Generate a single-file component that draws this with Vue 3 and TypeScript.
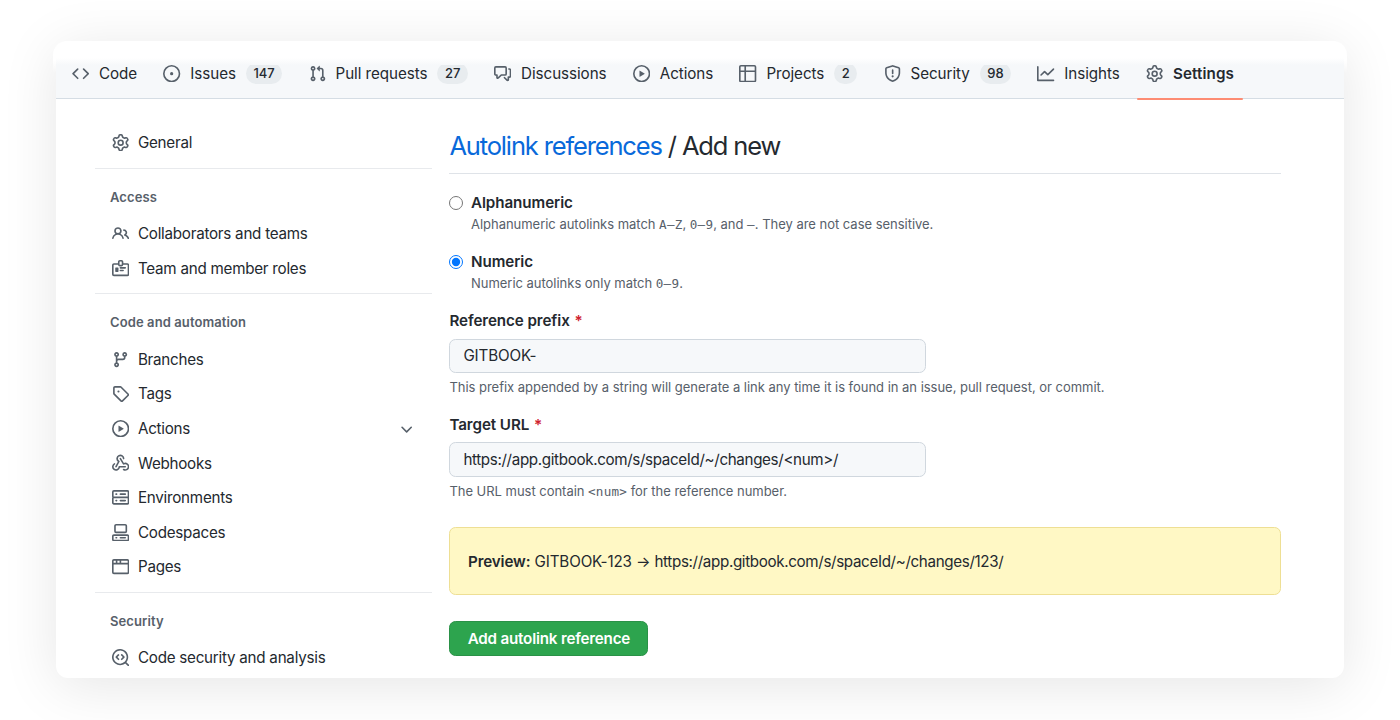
<script setup lang="ts">
import { computed, ref } from 'vue'

const icons = {
  code: 'M4.72 3.22a.75.75 0 011.06 1.06L2.06 8l3.72 3.72a.75.75 0 11-1.06 1.06L.47 8.53a.75.75 0 010-1.06l4.25-4.25zm6.56 0a.75.75 0 10-1.06 1.06L13.94 8l-3.72 3.72a.75.75 0 101.06 1.06l4.25-4.25a.75.75 0 000-1.06l-4.25-4.25z',
  issue: 'M8 9.5a1.5 1.5 0 100-3 1.5 1.5 0 000 3zM8 0a8 8 0 100 16A8 8 0 008 0zM1.5 8a6.5 6.5 0 1113 0 6.5 6.5 0 01-13 0z',
  pull: 'M7.177 3.073L9.573.677A.25.25 0 0110 .854v4.792a.25.25 0 01-.427.177L7.177 3.427a.25.25 0 010-.354zM3.75 2.5a.75.75 0 100 1.5.75.75 0 000-1.5zm-2.25.75a2.25 2.25 0 113 2.122v5.256a2.251 2.251 0 11-1.5 0V5.372A2.25 2.25 0 011.5 3.25zM11 2.5h-1V4h1a1 1 0 011 1v5.628a2.251 2.251 0 101.5 0V5A2.5 2.5 0 0011 2.5zm1 10.25a.75.75 0 111.5 0 .75.75 0 01-1.5 0zM3.75 12a.75.75 0 100 1.5.75.75 0 000-1.5z',
  discussion: 'M1.5 2.75a.25.25 0 01.25-.25h8.5a.25.25 0 01.25.25v5.5a.25.25 0 01-.25.25h-3.5a.75.75 0 00-.53.22L3.5 11.44V9.25a.75.75 0 00-.75-.75h-1a.25.25 0 01-.25-.25v-5.5zM1.75 1A1.75 1.75 0 000 2.75v5.5C0 9.216.784 10 1.75 10H2v1.543a1.457 1.457 0 002.487 1.03L7.061 10h3.189A1.75 1.75 0 0012 8.25v-5.5A1.75 1.75 0 0010.25 1h-8.5zM14.5 4.75a.25.25 0 00-.25-.25h-.5a.75.75 0 110-1.5h.5c.966 0 1.75.784 1.75 1.75v5.5A1.75 1.75 0 0114.25 12H14v1.543a1.457 1.457 0 01-2.487 1.03L9.22 12.28a.75.75 0 111.06-1.06l2.22 2.22v-2.19a.75.75 0 01.75-.75h1a.25.25 0 00.25-.25v-5.5z',
  play: 'M1.5 8a6.5 6.5 0 1113 0 6.5 6.5 0 01-13 0zM8 0a8 8 0 100 16A8 8 0 008 0zM6.379 5.227A.25.25 0 006 5.442v5.117a.25.25 0 00.379.214l4.264-2.559a.25.25 0 000-.428L6.379 5.227z',
  table: 'M0 1.75C0 .784.784 0 1.75 0h12.5C15.216 0 16 .784 16 1.75v12.5A1.75 1.75 0 0114.25 16H1.75A1.75 1.75 0 010 14.25V1.75zM1.5 6.5v7.75c0 .138.112.25.25.25H5v-8H1.5zM5 5H1.5V1.75a.25.25 0 01.25-.25H5V5zm1.5 1.5v8h7.75a.25.25 0 00.25-.25V6.5h-8zm8-1.5h-8V1.5h7.75a.25.25 0 01.25.25V5z',
  shield: 'M7.467.133a1.75 1.75 0 011.066 0l5.25 1.68A1.75 1.75 0 0115 3.48V7c0 1.566-.32 3.182-1.303 4.682-.983 1.498-2.585 2.813-5.032 3.855a1.7 1.7 0 01-1.33 0c-2.447-1.042-4.049-2.357-5.032-3.855C1.32 10.182 1 8.566 1 7V3.48a1.75 1.75 0 011.217-1.667l5.25-1.68zm.61 1.429a.25.25 0 00-.153 0l-5.25 1.68a.25.25 0 00-.174.238V7c0 1.358.275 2.666 1.057 3.86.784 1.194 2.121 2.34 4.366 3.297a.2.2 0 00.154 0c2.245-.956 3.582-2.104 4.366-3.298C13.225 9.666 13.5 8.36 13.5 7V3.48a.25.25 0 00-.174-.237l-5.25-1.68zM9 10.5a1 1 0 11-2 0 1 1 0 012 0zm-.25-5.75a.75.75 0 10-1.5 0v3a.75.75 0 001.5 0v-3z',
  graph: 'M1.5 1.75a.75.75 0 00-1.5 0v12.5c0 .414.336.75.75.75h14.5a.75.75 0 000-1.5H1.5V1.75zm14.28 2.53a.75.75 0 00-1.06-1.06L10 7.94 7.53 5.47a.75.75 0 00-1.06 0L3.22 8.72a.75.75 0 001.06 1.06L7 7.06l2.47 2.47a.75.75 0 001.06 0l5.25-5.25z',
  gear: 'M7.429 1.525a6.593 6.593 0 011.142 0c.036.003.108.036.137.146l.289 1.105c.147.56.55.967.997 1.189.174.086.341.183.501.29.417.278.97.423 1.53.27l1.102-.303c.11-.03.175.016.195.046.219.31.41.641.573.989.014.031.022.11-.059.19l-.815.806c-.411.406-.562.957-.53 1.456a4.588 4.588 0 010 .582c-.032.499.119 1.05.53 1.456l.815.806c.08.08.073.159.059.19a6.494 6.494 0 01-.573.99c-.02.029-.086.074-.195.045l-1.103-.303c-.559-.153-1.112-.008-1.529.27-.16.107-.327.204-.5.29-.449.222-.851.628-.998 1.189l-.289 1.105c-.029.11-.101.143-.137.146a6.613 6.613 0 01-1.142 0c-.036-.003-.108-.037-.137-.146l-.289-1.105c-.147-.56-.55-.967-.997-1.189a4.502 4.502 0 01-.501-.29c-.417-.278-.97-.423-1.53-.27l-1.102.303c-.11.03-.175-.016-.195-.046a6.492 6.492 0 01-.573-.989c-.014-.031-.022-.11.059-.19l.815-.806c.411-.406.562-.957.53-1.456a4.587 4.587 0 010-.582c.032-.499-.119-1.05-.53-1.456l-.815-.806c-.08-.08-.073-.159-.059-.19a6.44 6.44 0 01.573-.99c.02-.029.086-.075.195-.045l1.103.303c.559.153 1.112.008 1.529-.27.16-.107.327-.204.5-.29.449-.222.851-.628.998-1.189l.289-1.105c.029-.11.101-.143.137-.146zM8 0c-.236 0-.47.01-.701.03-.743.065-1.29.615-1.458 1.261l-.29 1.106c-.017.066-.078.158-.211.224a5.994 5.994 0 00-.668.386c-.123.082-.233.09-.3.071L3.27 2.776c-.644-.177-1.392.02-1.82.63a7.977 7.977 0 00-.704 1.217c-.315.675-.111 1.422.363 1.891l.815.806c.05.048.098.147.088.294a6.084 6.084 0 000 .772c.01.147-.038.246-.088.294l-.815.806c-.474.469-.678 1.216-.363 1.891.2.428.436.835.704 1.218.428.609 1.176.806 1.82.63l1.103-.303c.066-.019.176-.011.299.071.213.143.436.272.668.386.133.066.194.158.212.224l.289 1.106c.169.646.715 1.196 1.458 1.26a8.094 8.094 0 001.402 0c.743-.064 1.29-.614 1.458-1.26l.29-1.106c.017-.066.078-.158.211-.224a5.98 5.98 0 00.668-.386c.123-.082.233-.09.3-.071l1.102.302c.644.177 1.392-.02 1.82-.63.268-.382.505-.789.704-1.217.315-.675.111-1.422-.364-1.891l-.814-.806c-.05-.048-.098-.147-.088-.294a6.1 6.1 0 000-.772c-.01-.147.039-.246.088-.294l.814-.806c.475-.469.679-1.216.364-1.891a7.992 7.992 0 00-.704-1.218c-.428-.609-1.176-.806-1.82-.63l-1.103.303c-.066.019-.176.011-.299-.071a5.991 5.991 0 00-.668-.386c-.133-.066-.194-.158-.212-.224L10.16 1.29C9.99.645 9.444.095 8.701.031A8.094 8.094 0 008 0zm1.5 8a1.5 1.5 0 11-3 0 1.5 1.5 0 013 0zM11 8a3 3 0 11-6 0 3 3 0 016 0z',
  people: 'M5.5 3.5a2 2 0 100 4 2 2 0 000-4zM2 5.5a3.5 3.5 0 115.898 2.549 5.507 5.507 0 013.034 4.084.75.75 0 11-1.482.235 4.001 4.001 0 00-7.9 0 .75.75 0 01-1.482-.236A5.507 5.507 0 013.102 8.05 3.49 3.49 0 012 5.5zM11 4a.75.75 0 100 1.5 1.5 1.5 0 01.666 2.844.75.75 0 00-.416.672v.352a.75.75 0 00.574.73c1.2.289 2.162 1.2 2.522 2.372a.75.75 0 101.434-.44 5.01 5.01 0 00-2.56-3.012A3 3 0 0011 4z',
  badge: 'M3 7.5a.5.5 0 01.5-.5h2a.5.5 0 01.5.5v3a.5.5 0 01-.5.5h-2a.5.5 0 01-.5-.5v-3zm4 2.25A.75.75 0 017.75 9h2.5a.75.75 0 010 1.5h-2.5A.75.75 0 017 9.75zM7.75 6.5a.75.75 0 000 1.5h4.5a.75.75 0 000-1.5h-4.5zM7.25 0h1.5c.966 0 1.75.784 1.75 1.75V3h3.75c.966 0 1.75.784 1.75 1.75v8.5A1.75 1.75 0 0114.25 15H1.75A1.75 1.75 0 010 13.25v-8.5C0 3.784.784 3 1.75 3H5.5V1.75C5.5.784 6.284 0 7.25 0zm3.232 4.5A1.75 1.75 0 018.75 6h-1.5a1.75 1.75 0 01-1.732-1.5H1.75a.25.25 0 00-.25.25v8.5c0 .138.112.25.25.25h12.5a.25.25 0 00.25-.25v-8.5a.25.25 0 00-.25-.25h-3.768zM7 1.75v2.5c0 .138.112.25.25.25h1.5A.25.25 0 009 4.25v-2.5a.25.25 0 00-.25-.25h-1.5a.25.25 0 00-.25.25z',
  branch: 'M11.75 2.5a.75.75 0 100 1.5.75.75 0 000-1.5zm-2.25.75a2.25 2.25 0 113 2.122V6A2.5 2.5 0 0110 8.5H6a1 1 0 00-1 1v1.128a2.251 2.251 0 11-1.5 0V5.372a2.25 2.25 0 111.5 0v1.836A2.492 2.492 0 016 7h4a1 1 0 001-1v-.628A2.25 2.25 0 019.5 3.25zM4.25 12a.75.75 0 100 1.5.75.75 0 000-1.5zM3.5 3.25a.75.75 0 111.5 0 .75.75 0 01-1.5 0z',
  tag: 'M2.5 7.775V2.75a.25.25 0 01.25-.25h5.025a.25.25 0 01.177.073l6.25 6.25a.25.25 0 010 .354l-5.025 5.025a.25.25 0 01-.354 0l-6.25-6.25a.25.25 0 01-.073-.177zm-1.5 0V2.75C1 1.784 1.784 1 2.75 1h5.025c.464 0 .91.184 1.238.513l6.25 6.25a1.75 1.75 0 010 2.474l-5.026 5.026a1.75 1.75 0 01-2.474 0l-6.25-6.25A1.75 1.75 0 011 7.775zM6 5a1 1 0 100 2 1 1 0 000-2z',
  webhook: 'M5.5 4.25a2.25 2.25 0 014.5 0 .75.75 0 001.5 0 3.75 3.75 0 10-6.14 2.889l-2.272 4.258a.75.75 0 001.324.706L7 7.25a.75.75 0 00-.309-1.015A2.25 2.25 0 015.5 4.25zM7.364 3.607a.75.75 0 011.03.257l2.608 4.349a3.75 3.75 0 11-.628 6.785.75.75 0 01.752-1.299 2.25 2.25 0 10-.033-3.88.75.75 0 01-1.03-.256L7.107 4.636a.75.75 0 01.257-1.03zM2.9 8.776A.75.75 0 012.625 9.8 2.25 2.25 0 106 11.75a.75.75 0 01.75-.751h5.5a.75.75 0 010 1.5H7.425a3.751 3.751 0 11-5.55-3.998.75.75 0 011.024.274z',
  server: 'M1.75 1A1.75 1.75 0 000 2.75v4c0 .372.116.717.314 1a1.742 1.742 0 00-.314 1v4c0 .966.784 1.75 1.75 1.75h12.5A1.75 1.75 0 0016 12.75v-4c0-.372-.116-.717-.314-1 .198-.283.314-.628.314-1v-4A1.75 1.75 0 0014.25 1H1.75zm0 7.5a.25.25 0 00-.25.25v4c0 .138.112.25.25.25h12.5a.25.25 0 00.25-.25v-4a.25.25 0 00-.25-.25H1.75zM1.5 2.75a.25.25 0 01.25-.25h12.5a.25.25 0 01.25.25v4a.25.25 0 01-.25.25H1.75a.25.25 0 01-.25-.25v-4zm5.5 2A.75.75 0 017.75 4h4.5a.75.75 0 010 1.5h-4.5A.75.75 0 017 4.75zM7.75 10a.75.75 0 000 1.5h4.5a.75.75 0 000-1.5h-4.5zM3 4.75A.75.75 0 013.75 4h.5a.75.75 0 010 1.5h-.5A.75.75 0 013 4.75zM3.75 10a.75.75 0 000 1.5h.5a.75.75 0 000-1.5h-.5z',
  codespaces: 'M2 1.75C2 .784 2.784 0 3.75 0h8.5C13.216 0 14 .784 14 1.75v5a1.75 1.75 0 01-1.75 1.75h-8.5A1.75 1.75 0 012 6.75v-5zm1.75-.25a.25.25 0 00-.25.25v5c0 .138.112.25.25.25h8.5a.25.25 0 00.25-.25v-5a.25.25 0 00-.25-.25h-8.5zM0 11.25c0-.966.784-1.75 1.75-1.75h12.5c.966 0 1.75.784 1.75 1.75v3A1.75 1.75 0 0114.25 16H1.75A1.75 1.75 0 010 14.25v-3zM1.75 11a.25.25 0 00-.25.25v3c0 .138.112.25.25.25h12.5a.25.25 0 00.25-.25v-3a.25.25 0 00-.25-.25H1.75zM3 12.75a.75.75 0 01.75-.75h.5a.75.75 0 010 1.5h-.5a.75.75 0 01-.75-.75zm4 0a.75.75 0 01.75-.75h4.5a.75.75 0 010 1.5h-4.5a.75.75 0 01-.75-.75z',
  browser: 'M0 2.75C0 1.784.784 1 1.75 1h12.5c.966 0 1.75.784 1.75 1.75v10.5A1.75 1.75 0 0114.25 15H1.75A1.75 1.75 0 010 13.25V2.75zm1.75-.25a.25.25 0 00-.25.25V4.5h2v-2H1.75zM5 2.5v2h2v-2H5zm3.5 0v2h6V2.75a.25.25 0 00-.25-.25H8.5zm6 3.5h-13v7.25c0 .138.112.25.25.25h12.5a.25.25 0 00.25-.25V6z',
  codescan: 'M8.47 4.97a.75.75 0 000 1.06L9.94 7.5 8.47 8.97a.75.75 0 101.06 1.06l2-2a.75.75 0 000-1.06l-2-2a.75.75 0 00-1.06 0zM6.53 6.03a.75.75 0 00-1.06-1.06l-2 2a.75.75 0 000 1.06l2 2a.75.75 0 101.06-1.06L5.06 7.5l1.47-1.47zM12.246 13.307a7.5 7.5 0 111.06-1.06l2.474 2.473a.75.75 0 11-1.06 1.06l-2.474-2.473zM1.5 7.5a6 6 0 1110.386 4.094.75.75 0 00-.292.293A6 6 0 011.5 7.5z',
  chevron: 'M12.78 6.22a.75.75 0 010 1.06l-4.25 4.25a.75.75 0 01-1.06 0L3.22 7.28a.75.75 0 011.06-1.06L8 9.94l3.72-3.72a.75.75 0 011.06 0z',
} as const

type IconName = keyof typeof icons

interface Tab {
  icon: IconName
  label: string
  count?: number
  active?: boolean
}

interface MenuItem {
  icon: IconName
  label: string
  expandable?: boolean
}

interface MenuGroup {
  title?: string
  items: MenuItem[]
}

const tabs: Tab[] = [
  { icon: 'code', label: 'Code' },
  { icon: 'issue', label: 'Issues', count: 147 },
  { icon: 'pull', label: 'Pull requests', count: 27 },
  { icon: 'discussion', label: 'Discussions' },
  { icon: 'play', label: 'Actions' },
  { icon: 'table', label: 'Projects', count: 2 },
  { icon: 'shield', label: 'Security', count: 98 },
  { icon: 'graph', label: 'Insights' },
  { icon: 'gear', label: 'Settings', active: true },
]

const groups: MenuGroup[] = [
  { items: [{ icon: 'gear', label: 'General' }] },
  {
    title: 'Access',
    items: [
      { icon: 'people', label: 'Collaborators and teams' },
      { icon: 'badge', label: 'Team and member roles' },
    ],
  },
  {
    title: 'Code and automation',
    items: [
      { icon: 'branch', label: 'Branches' },
      { icon: 'tag', label: 'Tags' },
      { icon: 'play', label: 'Actions', expandable: true },
      { icon: 'webhook', label: 'Webhooks' },
      { icon: 'server', label: 'Environments' },
      { icon: 'codespaces', label: 'Codespaces' },
      { icon: 'browser', label: 'Pages' },
    ],
  },
  {
    title: 'Security',
    items: [{ icon: 'codescan', label: 'Code security and analysis' }],
  },
]

const kind = ref<'alphanumeric' | 'numeric'>('numeric')
const prefix = ref('GITBOOK-')
const target = ref('https://app.gitbook.com/s/spaceId/~/changes/<num>/')
const previewUrl = computed(() => target.value.replace('<num>', '123'))
</script>

<template>
  <div class="page">
    <div class="card">
      <div class="fade"></div>
      <nav class="tabs">
        <a v-for="tab in tabs" :key="tab.label" class="tab" :class="{ active: tab.active }">
          <svg class="icon" viewBox="0 0 16 16"><path fill-rule="evenodd" :d="icons[tab.icon]" /></svg>
          <span class="tab-label">{{ tab.label }}</span>
          <span v-if="tab.count" class="count">{{ tab.count }}</span>
        </a>
      </nav>

      <div class="body">
        <aside class="side">
          <section v-for="(group, i) in groups" :key="i" class="group">
            <h3 v-if="group.title" class="group-title">{{ group.title }}</h3>
            <a v-for="item in group.items" :key="item.label" class="item">
              <svg class="icon" viewBox="0 0 16 16"><path fill-rule="evenodd" :d="icons[item.icon]" /></svg>
              <span class="item-label">{{ item.label }}</span>
              <svg v-if="item.expandable" class="icon" viewBox="0 0 16 16"><path :d="icons.chevron" /></svg>
            </a>
          </section>
        </aside>

        <main class="main">
          <h2 class="title"><a class="link">Autolink references</a> / Add new</h2>

          <label class="option">
            <input v-model="kind" class="radio" type="radio" value="alphanumeric" />
            <span class="option-text">
              <strong class="label">Alphanumeric</strong>
              <span class="note">Alphanumeric autolinks match <code>A–Z</code>, <code>0–9</code>, and <code>–</code>. They are not case sensitive.</span>
            </span>
          </label>
          <label class="option">
            <input v-model="kind" class="radio" type="radio" value="numeric" />
            <span class="option-text">
              <strong class="label">Numeric</strong>
              <span class="note">Numeric autolinks only match <code>0–9</code>.</span>
            </span>
          </label>

          <div class="field">
            <label class="label" for="prefix">Reference prefix <span class="required">*</span></label>
            <input id="prefix" v-model="prefix" class="input" type="text" />
            <p class="note">This prefix appended by a string will generate a link any time it is found in an issue, pull request, or commit.</p>
          </div>
          <div class="field">
            <label class="label" for="target">Target URL <span class="required">*</span></label>
            <input id="target" v-model="target" class="input url" type="text" />
            <p class="note">The URL must contain <code>&lt;num&gt;</code> for the reference number.</p>
          </div>

          <div class="preview">
            <p><strong>Preview:</strong> {{ prefix }}123 → <span class="url">{{ previewUrl }}</span></p>
          </div>
          <button class="submit" type="button">Add autolink reference</button>
        </main>
      </div>
    </div>
  </div>
</template>

<style>
body {
  margin: 0;
  background: #fff;
}
</style>

<style scoped>
.page {
  box-sizing: border-box;
  width: 1400px;
  height: 720px;
  padding: 41px 56px 42px;
  overflow: hidden;
  background: #fff;
  color: #24292f;
  font-family: Inter, 'Liberation Sans', sans-serif;
  font-size: 15.2px;
}

.card {
  position: relative;
  height: 637px;
  border-radius: 12px;
  background: #fff;
  box-shadow: 0 8px 56px rgba(0, 0, 0, 0.1);
}

/* white lip that overhangs the card on both sides and melts into the tab bar */
.card::before {
  content: '';
  position: absolute;
  top: 0;
  left: -3px;
  right: -3px;
  height: 32px;
  border-radius: 14px 14px 0 0;
  background: linear-gradient(#fff 60%, rgba(255, 255, 255, 0));
}

.fade {
  position: relative;
  height: 24px;
  background: linear-gradient(#fff 17px, #f6f8fa 24px);
  border-radius: 14px 14px 0 0;
}

.tabs {
  position: relative;
  box-sizing: border-box;
  display: flex;
  align-items: center;
  gap: 9px;
  height: 34px;
  padding-left: 7.5px;
  padding-bottom: 16px;
  border-bottom: 1px solid #d5dde4;
  background: #f6f8fa;
  clip-path: inset(0 0 -1px);
}

.tab {
  position: relative;
  display: flex;
  align-items: center;
  height: 22px;
  padding: 0 8.65px;
  line-height: 22px;
  letter-spacing: -0.06px;
}

.tab.active {
  font-weight: 600;
  letter-spacing: 0.12px;
}

.tab.active::after {
  content: '';
  position: absolute;
  left: 0;
  right: 0;
  bottom: -15.5px;
  height: 2px;
  border-radius: 1px;
  background: #fd8c73;
}

.icon {
  flex: none;
  width: 17.3px;
  height: 17.3px;
  margin-right: 8.65px;
  fill: #57606a;
}

.tab .icon {
  margin-right: 9.6px;
}

.count {
  box-sizing: border-box;
  min-width: 21.6px;
  height: 21.6px;
  margin-left: 9.9px;
  padding: 0 7.6px;
  border-radius: 11px;
  background: #e8ecef;
  font-size: 13px;
  font-weight: 500;
  line-height: 21.6px;
  letter-spacing: 0;
  text-align: center;
}

.body {
  display: flex;
  gap: 17.4px;
  height: 579px;
  padding: 0 63.4px 0 39px;
  overflow: hidden;
}

.side {
  flex: none;
  width: 337px;
  padding-top: 26px;
}

.group {
  padding-bottom: 7.4px;
}

.group:first-child {
  padding-bottom: 8.2px;
}

.group + .group {
  border-top: 1px solid #e8eaed;
}

.group-title {
  margin: 0;
  padding: 17px 15px 8.8px;
  color: #57606a;
  font-size: 13px;
  font-weight: 600;
  line-height: 22px;
  letter-spacing: 0.1px;
}

.item {
  display: flex;
  align-items: center;
  height: 34.6px;
  padding: 0 8px 0 17px;
  letter-spacing: -0.25px;
}

.item-label {
  flex: 1;
}

.main {
  flex: 1;
  min-width: 0;
  padding-top: 26px;
}

.title {
  margin: 0 0 18px;
  height: 48px;
  border-bottom: 1px solid #dfe3e8;
  font-size: 25.5px;
  font-weight: 400;
  line-height: 41px;
  letter-spacing: -1.15px;
}

.link {
  color: #0969da;
}

.option {
  display: flex;
  margin-bottom: 18px;
}

.radio {
  flex: none;
  width: 14px;
  height: 14px;
  margin: 4px 7.6px 0 0;
}

.option-text {
  display: block;
}

.label {
  display: block;
  font-weight: 600;
  line-height: 22px;
  letter-spacing: -0.08px;
}

.note {
  display: block;
  margin: 0;
  color: #57606a;
  font-size: 13px;
  line-height: 18px;
  letter-spacing: -0.025px;
}

.option .note {
  margin-top: 1px;
}

.note code {
  font-family: 'DejaVu Sans Mono', monospace;
  font-size: 12.6px;
  line-height: 1;
  letter-spacing: 0.2px;
}

.field {
  margin-bottom: 17.5px;
}

.required {
  margin-left: 1px;
  color: #cf222e;
}

.input {
  display: block;
  box-sizing: border-box;
  width: 476.5px;
  height: 34.6px;
  margin: 6.5px 0 5.4px;
  padding: 0 13px;
  border: 1px solid #d0d7de;
  border-radius: 6.5px;
  outline: none;
  background: #f6f8fa;
  color: inherit;
  font: inherit;
  letter-spacing: -0.12px;
}

.input.url,
.preview .url {
  letter-spacing: -0.355px;
}

.preview {
  box-sizing: border-box;
  height: 68px;
  margin: 27px 0 26px;
  padding: 23px 17.6px 21px;
  border: 1px solid #eedf94;
  border-radius: 6.5px;
  background: #fff8c5;
}

.preview p {
  margin: 0;
  line-height: 22px;
  letter-spacing: -0.13px;
  white-space: nowrap;
}

.preview strong {
  font-weight: 600;
}

.submit {
  box-sizing: border-box;
  width: 199px;
  height: 34.6px;
  padding: 0;
  border: 1px solid #2a9147;
  border-radius: 6.5px;
  background: #2da44e;
  color: #fff;
  font: inherit;
  font-weight: 600;
  letter-spacing: -0.2px;
}
</style>
